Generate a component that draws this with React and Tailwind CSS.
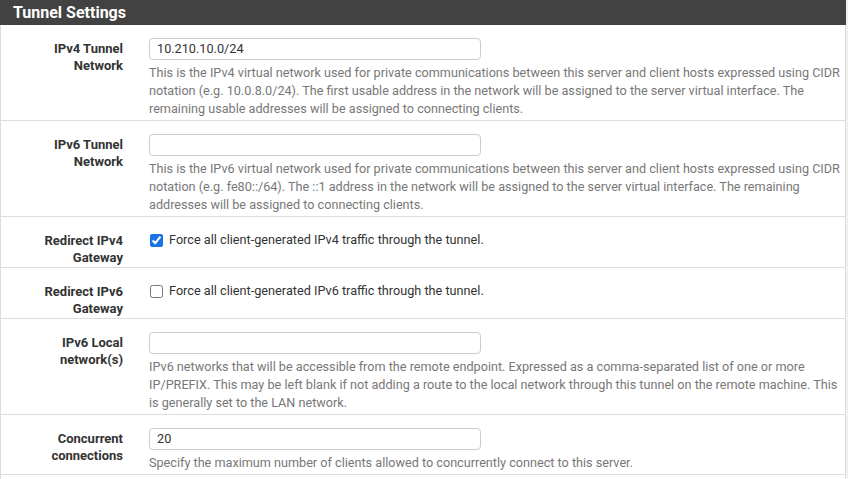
import React from "react";

const rows = [
  {
    label: ["IPv4 Tunnel", "Network"],
    type: "input",
    value: "10.210.10.0/24",
    help: "This is the IPv4 virtual network used for private communications between this server and client hosts expressed using CIDR notation (e.g. 10.0.8.0/24). The first usable address in the network will be assigned to the server virtual interface. The remaining usable addresses will be assigned to connecting clients.",
  },
  {
    label: ["IPv6 Tunnel", "Network"],
    type: "input",
    value: "",
    help: "This is the IPv6 virtual network used for private communications between this server and client hosts expressed using CIDR notation (e.g. fe80::/64). The ::1 address in the network will be assigned to the server virtual interface. The remaining addresses will be assigned to connecting clients.",
  },
  {
    label: ["Redirect IPv4", "Gateway"],
    type: "check",
    checked: true,
    text: "Force all client-generated IPv4 traffic through the tunnel.",
  },
  {
    label: ["Redirect IPv6", "Gateway"],
    type: "check",
    checked: false,
    text: "Force all client-generated IPv6 traffic through the tunnel.",
  },
  {
    label: ["IPv6 Local", "network(s)"],
    type: "input",
    value: "",
    help: "IPv6 networks that will be accessible from the remote endpoint. Expressed as a comma-separated list of one or more IP/PREFIX. This may be left blank if not adding a route to the local network through this tunnel on the remote machine. This is generally set to the LAN network.",
  },
  {
    label: ["Concurrent", "connections"],
    type: "input",
    value: "20",
    help: "Specify the maximum number of clients allowed to concurrently connect to this server.",
  },
];

export default function App() {
  return (
    <div className="w-[848px] h-[479px] overflow-hidden bg-white flex">
      <div className="w-[846px] flex flex-col font-['Roboto',sans-serif] border-l border-r border-[#dddddd]">
        <div className="h-[25px] bg-[#424242] text-white font-bold text-[16px] leading-[25px] pl-[13px] -ml-px w-[846px]">
          Tunnel Settings
        </div>
        {rows.map((r, i) => (
          <div
            key={i}
            className={
              r.type === "input"
                ? "flex border-b border-[#dddddd] pt-[13px] pb-[2px]"
                : "flex border-b border-[#dddddd] pt-[13px] pb-[1px]"
            }
          >
            <div className="w-[122px] shrink-0 text-right font-bold text-[13px] leading-[17px] text-[#333333] pt-[2px]">
              {r.label.map((l, j) => (
                <div key={j}>{l}</div>
              ))}
            </div>
            <div className="ml-[26px] w-[692px] text-[12.65px] leading-[18px] text-[#777777]">
              {r.type === "input" ? (
                <>
                  <div className="w-[332px] h-[22px] border border-[#cccccc] rounded-[4px] px-[7px] text-[12.7px] leading-[20px] text-[#333333]">
                    {r.value}
                  </div>
                  <div className="mt-1">{r.help}</div>
                </>
              ) : (
                <div className="flex items-center h-[20px]">
                  <input
                    type="checkbox"
                    defaultChecked={r.checked}
                    className="w-[13px] h-[13px] m-0 ml-[1px] accent-[#1a73e8]"
                  />
                  <span className="ml-[6px] text-[#333333] text-[12.7px]">{r.text}</span>
                </div>
              )}
            </div>
          </div>
        ))}
      </div>
      <div className="flex-1 bg-[#f0f0f0]" />
    </div>
  );
}
